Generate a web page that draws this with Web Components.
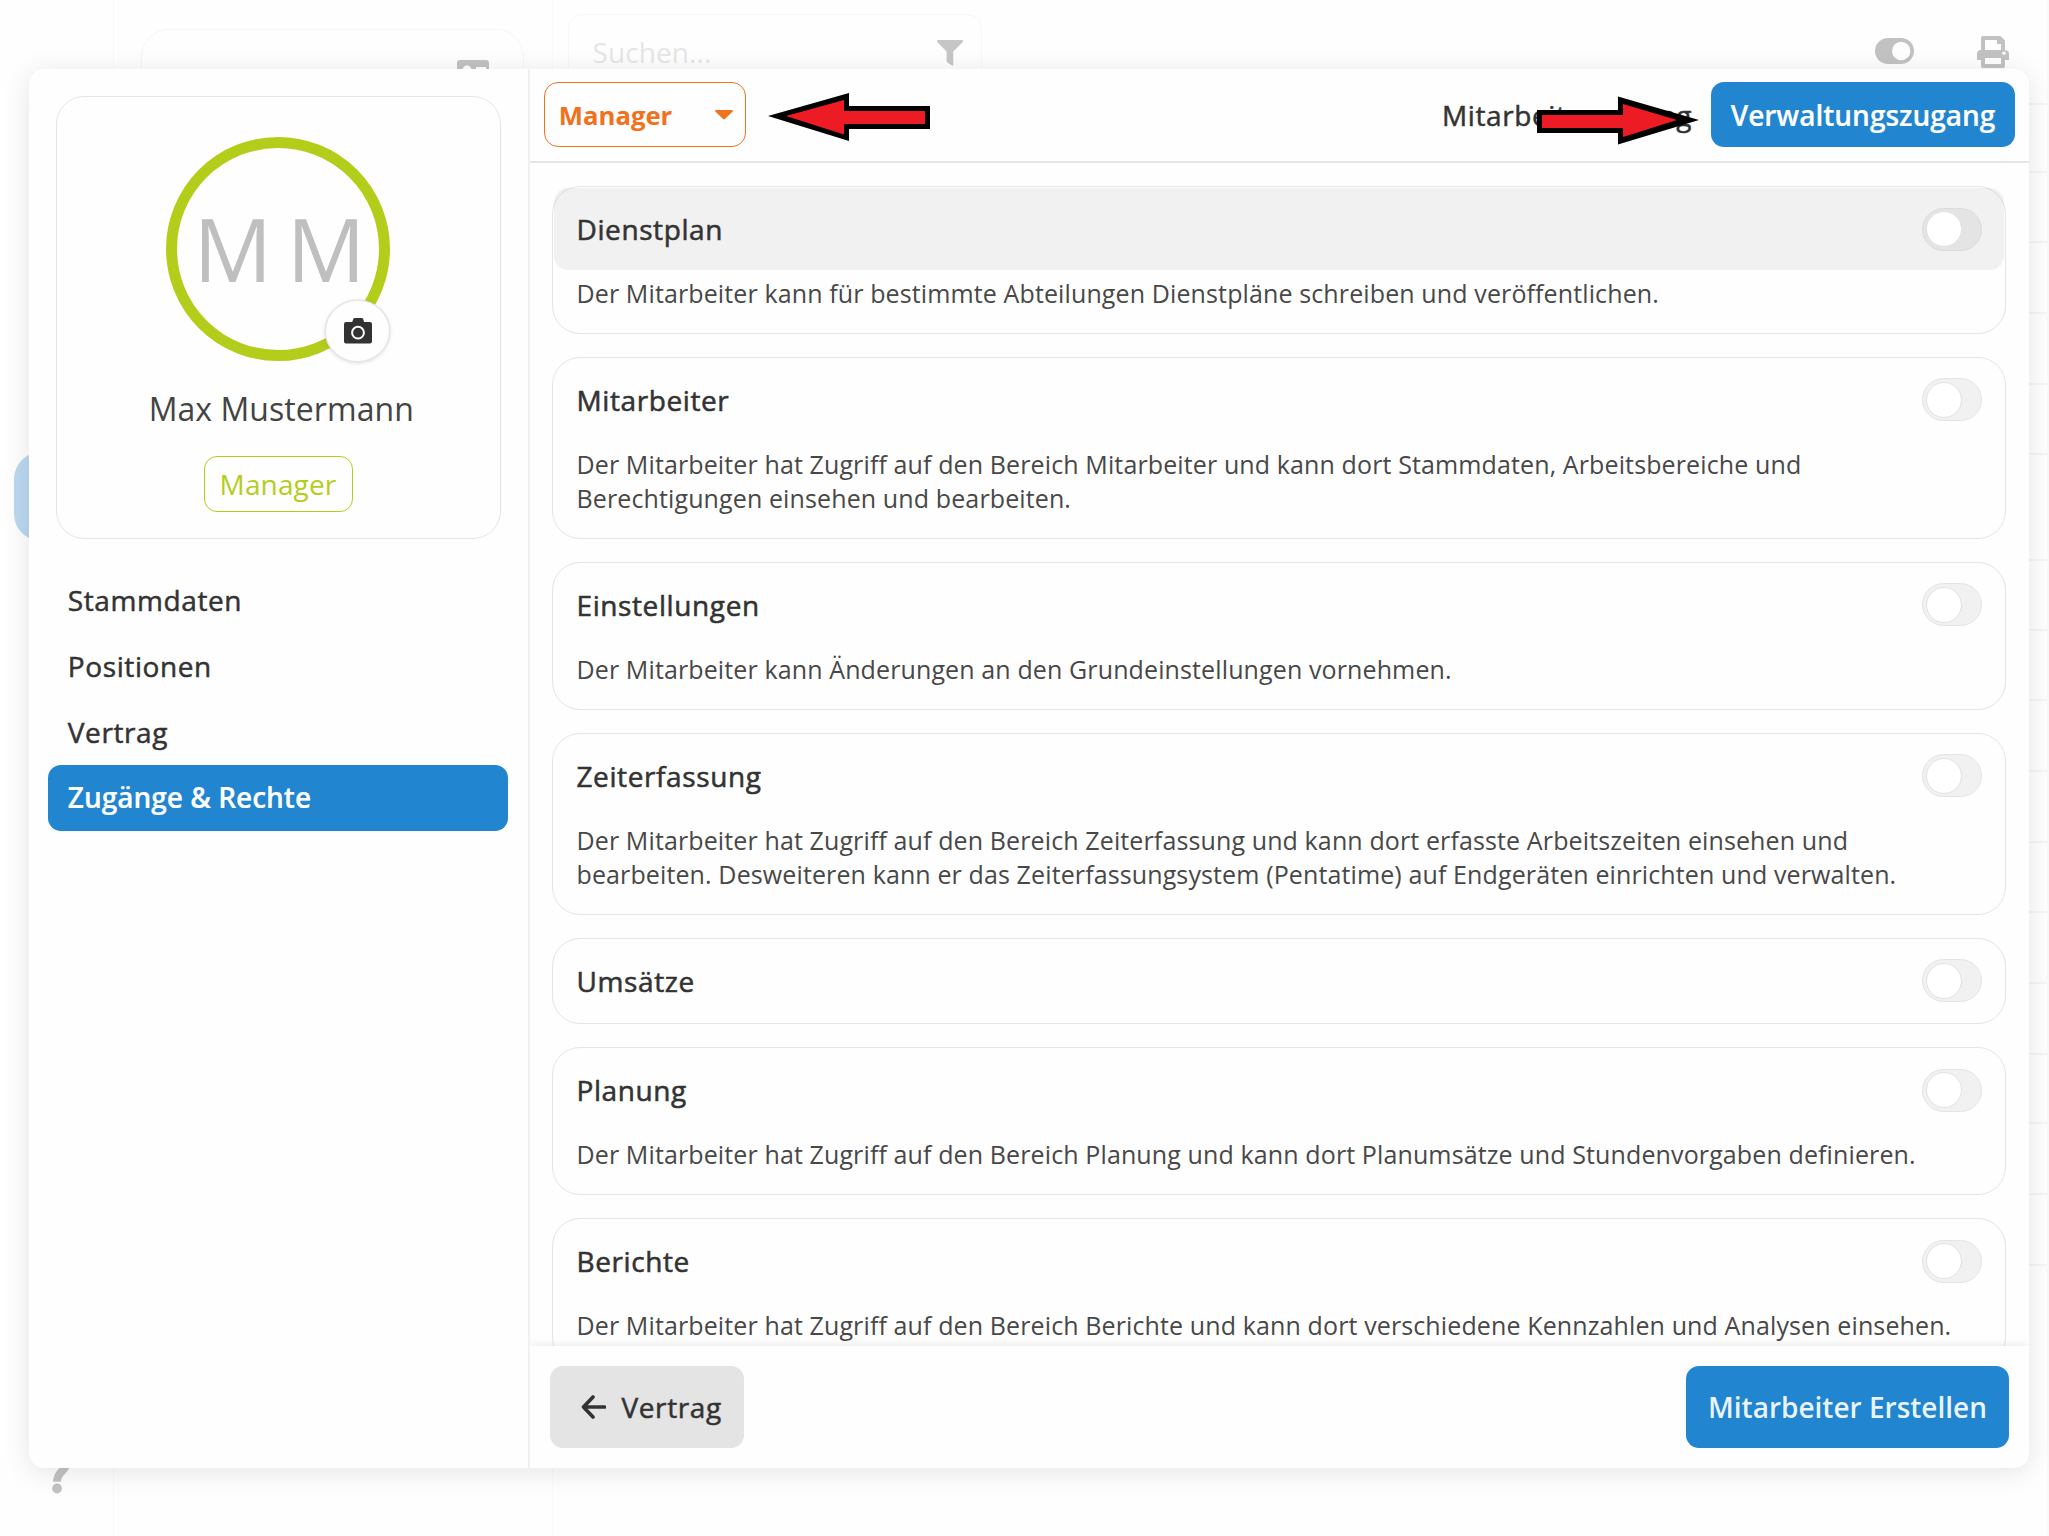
<!DOCTYPE html>
<html lang="de">
<head>
<meta charset="utf-8">
<title>Mitarbeiter – Zugänge &amp; Rechte</title>
<style>
html,body{margin:0;height:100%;overflow:hidden;background:#fefefe}
body{font-family:"Open Sans","Noto Sans",sans-serif;color:#333}
</style>
</head>
<body>
<staff-app>
  <backdrop-page></backdrop-page>
  <staff-dialog slot="dialog">
    <profile-card slot="side" name="Max Mustermann" initials="M M" role-name="Manager"></profile-card>
    <nav-list slot="side">
      <nav-item>Stammdaten</nav-item>
      <nav-item>Positionen</nav-item>
      <nav-item>Vertrag</nav-item>
      <nav-item active>Zugänge &amp; Rechte</nav-item>
    </nav-list>
    <access-bar slot="header"></access-bar>
    <right-card slot="rights" heading="Dienstplan" hovered>Der Mitarbeiter kann für bestimmte Abteilungen Dienstpläne schreiben und veröffentlichen.</right-card>
    <right-card slot="rights" heading="Mitarbeiter">Der Mitarbeiter hat Zugriff auf den Bereich Mitarbeiter und kann dort Stammdaten, Arbeitsbereiche und<br>Berechtigungen einsehen und bearbeiten.</right-card>
    <right-card slot="rights" heading="Einstellungen">Der Mitarbeiter kann Änderungen an den Grundeinstellungen vornehmen.</right-card>
    <right-card slot="rights" heading="Zeiterfassung">Der Mitarbeiter hat Zugriff auf den Bereich Zeiterfassung und kann dort erfasste Arbeitszeiten einsehen und<br>bearbeiten. Desweiteren kann er das Zeiterfassungsystem (Pentatime) auf Endgeräten einrichten und verwalten.</right-card>
    <right-card slot="rights" heading="Umsätze" plain></right-card>
    <right-card slot="rights" heading="Planung">Der Mitarbeiter hat Zugriff auf den Bereich Planung und kann dort Planumsätze und Stundenvorgaben definieren.</right-card>
    <right-card slot="rights" heading="Berichte">Der Mitarbeiter hat Zugriff auf den Bereich Berichte und kann dort verschiedene Kennzahlen und Analysen einsehen.</right-card>
    <dialog-footer slot="footer"></dialog-footer>
  </staff-dialog>
  <marker-arrow slot="marks" style="left:768px;top:92px" direction="left"></marker-arrow>
  <marker-arrow slot="marks" style="left:1537px;top:96px" direction="right"></marker-arrow>
</staff-app>

<script>
const define = (name, render) => customElements.define(name, class extends HTMLElement {
  connectedCallback() {
    if (this.shadowRoot) return;
    const t = document.createElement('template');
    t.innerHTML = render(this);
    this.attachShadow({mode: 'open'}).append(t.content.cloneNode(true));
  }
});

define('staff-app', () => `
<style>
:host{display:block;position:relative;width:2049px;height:1536px;overflow:hidden}
</style>
<slot></slot><slot name="dialog"></slot><slot name="marks"></slot>`);

/* Faded page behind the dialog */
define('backdrop-page', () => `
<style>
:host{display:flex;height:1536px}
.rail{box-sizing:border-box;width:114px;border-right:1.5px solid #f8f8f8;display:flex;flex-direction:column;padding-top:452px}
.pill{width:90px;height:89px;margin-left:13.5px;border-radius:27px;background:#bad8ef}
.help{margin-top:auto;height:86px;padding-left:44px}
.help svg{display:block}
.list{box-sizing:border-box;width:440px;border-right:1.5px solid #f9f9f9;padding:29px 28px 0 27px}
.box{box-sizing:border-box;height:300px;border:1.5px solid #f6f6f6;border-radius:28px;display:flex;justify-content:flex-end;padding:30px 34px}
.main{flex:1;display:flex;align-items:flex-start}
.search{box-sizing:border-box;width:414px;height:77px;margin:14px 0 0 15px;border:1.5px solid #f7f7f7;border-radius:14px;display:flex;align-items:center;justify-content:space-between;padding:0 18px 0 23.5px;color:#e6e6e6;font-size:28px;letter-spacing:.1px}
.search span{padding-bottom:2px}
.tools{display:flex;gap:63px;margin:36px 0 0 893px;align-items:flex-start}
.grid{width:19px;margin-left:19px;border-right:2px solid #f9f9f9;height:1536px}
.grid i{display:block;box-sizing:border-box;border-bottom:2px solid #f5f5f5}
</style>
<div class="rail"><div class="pill"></div>
 <div class="help"><svg width="30" height="44" viewBox="0 0 30 44"><path d="M3.500 17.500C5.500 8 11 5 15.500 5c5 0 7.800 4.500 6.800 9.500C21 21 13 22.500 13 31.800" fill="none" stroke="#c2c2c2" stroke-width="8"/><circle cx="13" cy="38.500" r="4.900" fill="#c2c2c2"/></svg></div></div>
<div class="list"><div class="box"><svg width="32" height="26" viewBox="0 0 32 26"><rect width="32" height="26" rx="3" fill="#c2c2c2"/><circle cx="10" cy="10" r="4.500" fill="#fefefe"/><path d="M19 7h10v3H19zM19 13h10v3H19zM3 22c0-5 14-5 14 0z" fill="#fefefe"/></svg></div></div>
<div class="main">
 <div class="search"><span>Suchen...</span><svg width="26" height="26" viewBox="0 0 26 26"><path d="M1.200 0h23.600c1.200 0 1.600 1.300.8 2.200L16.300 11.500V24.500c0 1-.9 1.300-1.700.8L10.300 22.500c-.5-.4-.7-.8-.7-1.400V11.500L.4 2.200C-.4 1.300 0 0 1.200 0z" fill="#c6c6c6"/></svg></div>
 <div class="tools">
  <svg width="39" height="27" viewBox="0 0 39 27" style="margin-top:2px"><rect width="39" height="26" rx="13" fill="#c2c2c2"/><circle cx="26.200" cy="13" r="9.200" fill="#fefefe"/></svg>
  <svg width="32" height="32" viewBox="0 0 32 32"><path d="M6 0H23.500L28 4.500V14.200h0a4 4 0 0 1 4 4V24H28v6a2 2 0 0 1-2 2H6a2 2 0 0 1-2-2V24H0V18a4 4 0 0 1 4-4V2a2 2 0 0 1 2-2z" fill="#c2c2c2"/><path d="M8 4H20V8h4v6H8zM8 22H24v6H8z" fill="#fefefe"/><circle cx="27" cy="17.200" r="1.700" fill="#fefefe"/></svg>
 </div>
 <div class="grid">${[105,68,70,71,71,70,106,70,70,71,71,70,71,71,69,71,71].map(h => `<i style="height:${h}px"></i>`).join('')}</div>
</div>`);

define('staff-dialog', () => `
<style>
:host{position:absolute;left:29px;top:69px;width:2000px;height:1399px;display:flex;border-radius:15px;background:#fefefe;box-shadow:0 4px 28px rgba(0,0,0,.1);overflow:hidden}
.side{box-sizing:border-box;width:501px;border-right:2px solid #f1f1f1;padding:27px 0 0}
.main{flex:1;min-width:0;display:flex;flex-direction:column}
.scroll{flex:1;min-height:0;overflow:hidden;display:flex;flex-direction:column;gap:23px;padding:23px 23px 0 22px}
</style>
<div class="side"><slot name="side"></slot></div>
<div class="main"><slot name="header"></slot><div class="scroll"><slot name="rights"></slot></div><slot name="footer"></slot></div>`);

define('profile-card', el => `
<style>
:host{box-sizing:border-box;display:flex;flex-direction:column;align-items:center;margin:0 27px 0 27px;height:443px;border:1.5px solid #e5e5e5;border-radius:28px;padding-top:40px}
.avatar{position:relative;box-sizing:border-box;width:224px;height:224px;margin-right:2px;border-radius:50%;border:11.5px solid #b4cd1a;display:flex;align-items:center;justify-content:center;font-size:87.500px;line-height:1;color:#bfbfbf}
.avatar span{white-space:pre;word-spacing:-8px;padding-left:4px;padding-bottom:1px}
.cam{position:absolute;left:149.500px;top:153px;width:63px;height:60px;border-radius:50%;background:#fefefe;box-shadow:0 0 0 1.500px #e6e6e6,0 1px 5px rgba(0,0,0,.2);display:flex;align-items:center;justify-content:center}
.name{margin-top:26px;padding-left:5.500px;font-size:32px;line-height:44px;letter-spacing:.06px;color:#444}
.role{margin:25px 1px 0 0;box-sizing:border-box;width:149px;height:56px;border:1.5px solid #b4cd1a;border-radius:13px;display:flex;align-items:center;justify-content:center;color:#b4cd1a;font-size:28px;letter-spacing:.15px}
</style>
<div class="avatar"><span>${el.getAttribute('initials')}</span><div class="cam"><svg width="28" height="26" viewBox="0 0 28 26"><path d="M2 4H8.200L9.200 1.300C9.500.5 10.300 0 11 0h6.400c.9 0 1.600.5 1.900 1.300L20 4h6a2 2 0 0 1 2 2V23.500a2 2 0 0 1-2 2H2a2 2 0 0 1-2-2V6a2 2 0 0 1 2-2z" fill="#333"/><circle cx="14" cy="14.700" r="5.900" fill="none" stroke="#fefefe" stroke-width="2"/></svg></div></div>
<div class="name">${el.getAttribute('name')}</div>
<div class="role">${el.getAttribute('role-name')}</div>`);

define('nav-list', () => `
<style>:host{display:flex;flex-direction:column;margin:27.500px 20px 0 19px}</style><slot></slot>`);

define('nav-item', () => `
<style>
:host{box-sizing:border-box;display:flex;align-items:center;height:66px;padding:0 19.800px;border-radius:13px;font-size:28px;letter-spacing:.6px;-webkit-text-stroke:.5px currentColor}
:host([active]){background:#2185d0;color:#fff;font-weight:600;letter-spacing:0;-webkit-text-stroke:.2px #fff;padding-bottom:1px}
</style><slot></slot>`);

define('access-bar', () => `
<style>
:host{box-sizing:border-box;display:flex;align-items:center;height:94px;border-bottom:2px solid #e6e6e6;padding:0 14px 1px;font-size:28px;white-space:nowrap}
.select{box-sizing:border-box;width:202px;height:65px;border:1.5px solid #f2711c;border-radius:14px;display:flex;align-items:center;justify-content:space-between;padding:1px 12.500px 0 13.800px;font-size:25.700px;font-weight:700;color:#f2711c}
.tab{margin-left:auto;padding-right:19px;letter-spacing:.6px;-webkit-text-stroke:.5px #333}
.on{box-sizing:border-box;width:304px;height:65px;border-radius:13px;background:#2185d0;color:#fff;font-weight:600;display:flex;align-items:center;justify-content:center;-webkit-text-stroke:.2px #fff}
</style>
<div class="select"><span>Manager</span><svg width="18" height="10" viewBox="0 0 18 10"><path d="M1 0H17c.9 0 1.200.8.600 1.400L10.200 8.800c-.7.7-1.700.7-2.400 0L.4 1.400C-.2.800.1 0 1 0z" fill="#f2711c"/></svg></div>
<div class="tab">Mitarbeiterzugang</div><div class="on">Verwaltungszugang</div>`);

define('toggle-switch', () => `
<style>
:host{box-sizing:border-box;display:block;width:60px;height:43px;border-radius:22px;border:1.5px solid #e4e4e4;background:#f1f1f1;padding:2.500px}
:host([dark]){background:#e4e4e4;border-color:#dcdcdc}
i{box-sizing:border-box;display:block;width:36px;height:36px;border:1.5px solid #e2e2e2;border-radius:50%;background:#fff}
</style><i></i>`);

define('right-card', el => `
<style>
:host{box-sizing:border-box;display:block;flex:none;border:1.5px solid #e5e5e5;border-radius:28px;padding-bottom:22.900px}
:host([plain]){padding-bottom:0}
header{box-sizing:border-box;display:flex;align-items:center;justify-content:space-between;height:82px;margin:1px 1px 0;padding:0 22px 0 22.500px;border-radius:14px}
:host([plain]) header{margin-bottom:1.300px}
:host([hovered]) header{background:rgba(0,0,0,.052)}
h2{margin:0;font-size:28px;font-weight:400;letter-spacing:.6px;-webkit-text-stroke:.55px #333}
p{margin:5.800px 0 0;padding:0 23.500px;font-size:25px;line-height:34.200px;letter-spacing:.12px;white-space:nowrap;color:#484848}
</style>
<header><h2>${el.getAttribute('heading')}</h2><toggle-switch ${el.hasAttribute('hovered') ? 'dark' : ''}></toggle-switch></header>
${el.hasAttribute('plain') ? '' : '<p><slot></slot></p>'}`);

define('dialog-footer', () => `
<style>
:host{position:relative;box-sizing:border-box;display:flex;flex:none;justify-content:space-between;align-items:flex-start;height:122px;padding:19.500px 20px 0;background:#fefefe;box-shadow:0 0 10px rgba(0,0,0,.1);clip-path:inset(-20px 0 0 0);font-size:28px}
.back,.create{box-sizing:border-box;height:82px;border-radius:13px;display:flex;align-items:center}
.back{width:194px;background:#e4e4e4;padding-left:30.500px;gap:16px;letter-spacing:.6px;-webkit-text-stroke:.5px #333}
.create{width:323px;justify-content:center;background:#2185d0;color:rgba(255,255,255,.92);font-weight:600}
</style>
<div class="back"><svg width="25" height="24" viewBox="0 0 25 24"><path d="M12 2L2.500 12 12 22M3 12H23.500" fill="none" stroke="#333" stroke-width="3.600" stroke-linecap="round" stroke-linejoin="round"/></svg><span>Vertrag</span></div>
<div class="create">Mitarbeiter Erstellen</div>`);

define('marker-arrow', el => `
<style>:host{position:absolute;display:block}svg{display:block;overflow:visible}</style>
<svg width="162" height="48" viewBox="0 0 162 48">${el.getAttribute('direction') === 'left'
  ? '<path d="M0 24L81 1V14H162V37H81V49Z"/><path d="M18 24L76 8V19H157V32H76V42.500Z" fill="#ed1c24"/>'
  : '<path d="M162 24L81 .500V14H0V37H81V48.500Z"/><path d="M140 24L86 8V19H5V32H86V41Z" fill="#ed1c24"/>'}</svg>`);
</script>
</body>
</html>
